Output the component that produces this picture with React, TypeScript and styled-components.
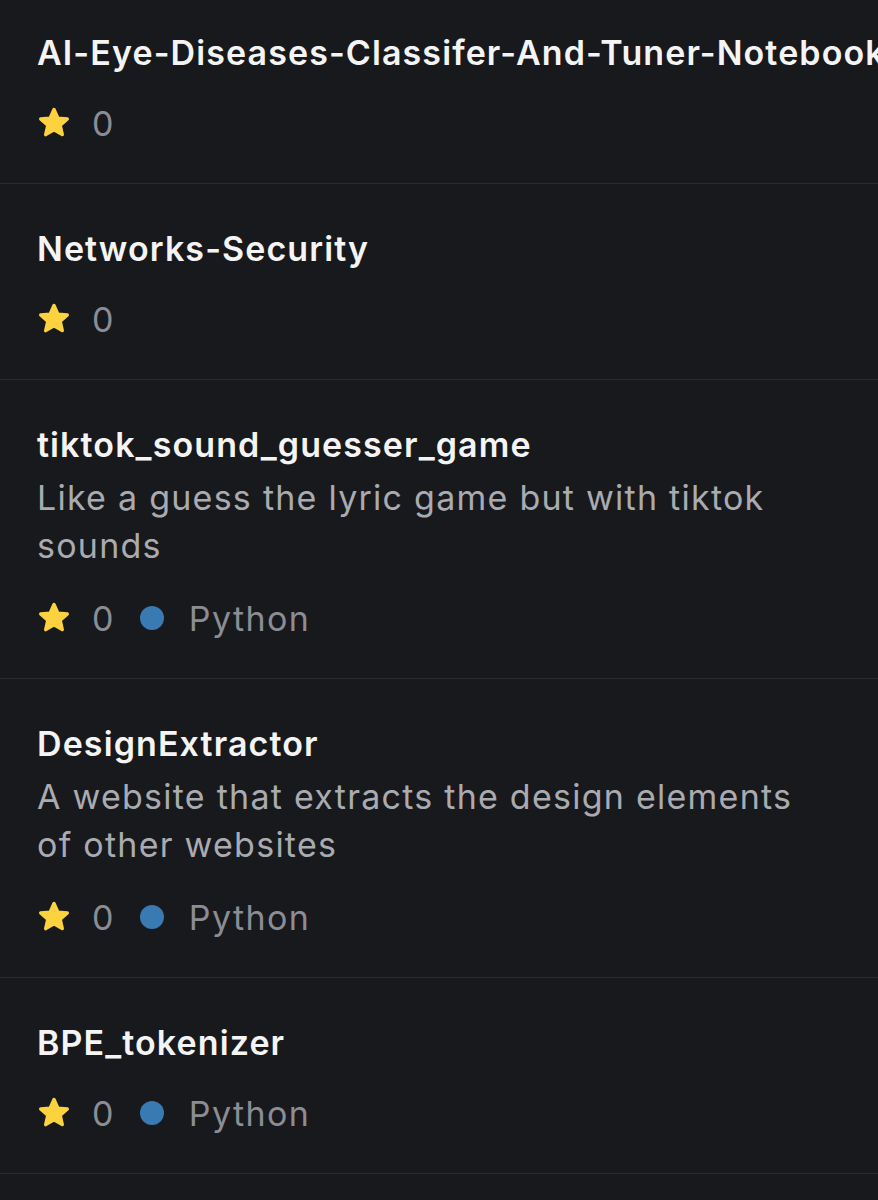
import React from "react";
import styled, { createGlobalStyle } from "styled-components";

const GlobalStyle = createGlobalStyle`
  html, body {
    margin: 0;
    padding: 0;
    background: #18191c;
    overflow: hidden;
  }
  body {
    font-family: Inter, "Noto Sans", sans-serif;
    -webkit-font-smoothing: antialiased;
  }
`;

const Page = styled.div`
  width: 878px;
  height: 1200px;
  overflow: hidden;
  background: #18191c;
`;

const List = styled.ul`
  list-style: none;
  margin: -12px 0 0 0;
  padding: 0;
`;

const Row = styled.li`
  padding: 41px 0 36px 37px;
  border-bottom: 1px solid #2a2b2f;
  display: flex;
  flex-direction: column;
`;

const Title = styled.div`
  font-size: 34px;
  line-height: 48px;
  font-weight: 600;
  color: #f4f4f5;
  white-space: nowrap;
  letter-spacing: 1.1px;
`;

const Description = styled.div`
  margin-top: 5px;
  font-size: 34px;
  line-height: 48px;
  font-weight: 400;
  color: #a9abb1;
  letter-spacing: 1.25px;
  padding-right: 60px;
`;

const Meta = styled.div<{ $afterDesc: boolean }>`
  margin-top: ${(p) => (p.$afterDesc ? "24px" : "22px")};
  display: flex;
  align-items: center;
  height: 48px;
  font-size: 34px;
  letter-spacing: 1.4px;
  color: #8b8d95;
`;

const StarCount = styled.span`
  margin-left: 21px;
`;

const LangDot = styled.span`
  width: 24px;
  height: 24px;
  border-radius: 50%;
  background: #3a7ab3;
  margin-left: 25px;
  flex-shrink: 0;
`;

const LangName = styled.span`
  margin-left: 25px;
`;

const Star = () => (
  <svg width="34" height="34" viewBox="0 0 34 34" aria-hidden>
    <path
      d="M17 3.5 L20.9 12.2 L30.3 13 L23.2 19.3 L25.3 28.6 L17 23.7 L8.7 28.6 L10.8 19.3 L3.7 13 L13.1 12.2 Z"
      fill="#fcd33f"
      stroke="#fcd33f"
      strokeWidth="3.4"
      strokeLinejoin="round"
    />
  </svg>
);

type Repo = { name: string; description?: string; stars: number; language?: string };

const repos: Repo[] = [
  { name: "AI-Eye-Diseases-Classifer-And-Tuner-Notebook", stars: 0 },
  { name: "Networks-Security", stars: 0 },
  {
    name: "tiktok_sound_guesser_game",
    description: "Like a guess the lyric game but with tiktok sounds",
    stars: 0,
    language: "Python",
  },
  {
    name: "DesignExtractor",
    description: "A website that extracts the design elements of other websites",
    stars: 0,
    language: "Python",
  },
  { name: "BPE_tokenizer", stars: 0, language: "Python" },
];

export default function App() {
  return (
    <Page>
      <GlobalStyle />
      <List>
        {repos.map((r) => (
          <Row key={r.name}>
            <Title>{r.name}</Title>
            {r.description && <Description>{r.description}</Description>}
            <Meta $afterDesc={!!r.description}>
              <Star />
              <StarCount>{r.stars}</StarCount>
              {r.language && (
                <>
                  <LangDot />
                  <LangName>{r.language}</LangName>
                </>
              )}
            </Meta>
          </Row>
        ))}
      </List>
    </Page>
  );
}
